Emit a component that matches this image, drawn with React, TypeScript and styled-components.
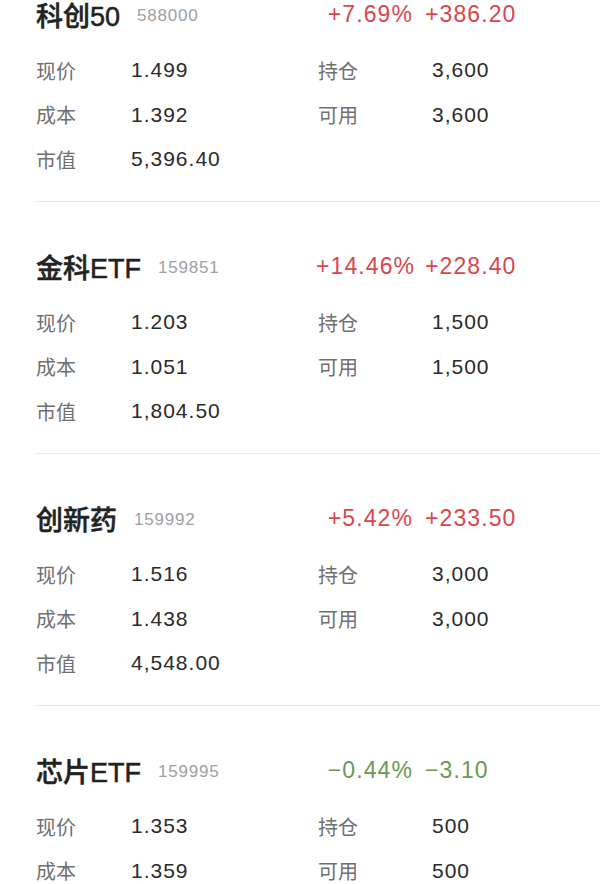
import styled, { createGlobalStyle } from "styled-components";

type Holding = {
  name: string;
  code: string;
  pct: string;
  profit: string;
  price: string;
  cost: string;
  value: string;
  qty: string;
  avail: string;
};

const holdings: Holding[] = [
  { name: "科创50", code: "588000", pct: "+7.69%", profit: "+386.20", price: "1.499", cost: "1.392", value: "5,396.40", qty: "3,600", avail: "3,600" },
  { name: "金科ETF", code: "159851", pct: "+14.46%", profit: "+228.40", price: "1.203", cost: "1.051", value: "1,804.50", qty: "1,500", avail: "1,500" },
  { name: "创新药", code: "159992", pct: "+5.42%", profit: "+233.50", price: "1.516", cost: "1.438", value: "4,548.00", qty: "3,000", avail: "3,000" },
  { name: "芯片ETF", code: "159995", pct: "−0.44%", profit: "−3.10", price: "1.353", cost: "1.359", value: "663.70", qty: "500", avail: "500" },
];

export default function App() {
  return (
    <>
      <GlobalCss />
      <ListCss>
        {holdings.map((h) => (
          <Card key={h.code} h={h} />
        ))}
      </ListCss>
    </>
  );
}

function Card({ h }: { h: Holding }) {
  const down = h.profit.startsWith("−");
  return (
    <CardCss>
      <HeaderCss>
        <TitleCss>
          <NameCss>{h.name}</NameCss>
          <CodeCss>{h.code}</CodeCss>
        </TitleCss>
        <PctCss $down={down}>{h.pct}</PctCss>
        <ProfitCss $down={down}>{h.profit}</ProfitCss>
      </HeaderCss>
      <GridCss>
        <LabelCss>现价</LabelCss>
        <ValueCss>{h.price}</ValueCss>
        <LabelCss>持仓</LabelCss>
        <ValueCss>{h.qty}</ValueCss>
        <LabelCss>成本</LabelCss>
        <ValueCss>{h.cost}</ValueCss>
        <LabelCss>可用</LabelCss>
        <ValueCss>{h.avail}</ValueCss>
        <LabelCss>市值</LabelCss>
        <ValueCss>{h.value}</ValueCss>
      </GridCss>
    </CardCss>
  );
}

const GlobalCss = createGlobalStyle`
  body {
    margin: 0;
    background: #fff;
    font-family: "Liberation Sans", "Noto Sans CJK SC", sans-serif;
    overflow: hidden;
  }
`;

// page is scrolled a little: the first card's top is above the window
const ListCss = styled.div`
  margin-top: -50px;
`;

const CardCss = styled.div`
  margin-left: 35px;
  padding: 45px 0 19.5px 1px;
  border-bottom: 1px solid #e6e6e6;
`;

const HeaderCss = styled.div`
  display: grid;
  grid-template-columns: 280px 95px 1fr;
  align-items: center;
  height: 36px;
`;

const TitleCss = styled.div`
  display: flex;
  align-items: center;
`;

const NameCss = styled.span`
  font-size: 27px;
  font-weight: 500;
  color: #222;
  -webkit-text-stroke: 0.5px #222;
`;

const CodeCss = styled.span`
  margin-left: 17px;
  margin-top: 3px;
  font-size: 17px;
  letter-spacing: 0.8px;
  color: #a0a0a0;
`;

const Change = styled.span<{ $down: boolean }>`
  font-size: 23px;
  letter-spacing: 1.1px;
  white-space: nowrap;
  color: ${(p) => (p.$down ? "#6a9a50" : "#d9464c")};
`;

const PctCss = styled(Change)`
  text-align: right;
  margin-right: -2px;
`;

const ProfitCss = styled(Change)`
  margin-left: 14px;
`;

const GridCss = styled.div`
  margin-top: 17px;
  display: grid;
  grid-template-columns: 95px 187px 114px 1fr;
  grid-auto-rows: 44.5px;
  align-items: center;
`;

const LabelCss = styled.span`
  font-size: 20px;
  color: #707070;
`;

const ValueCss = styled.span`
  font-size: 21px;
  letter-spacing: 1px;
  color: #2a2a2a;
`;
